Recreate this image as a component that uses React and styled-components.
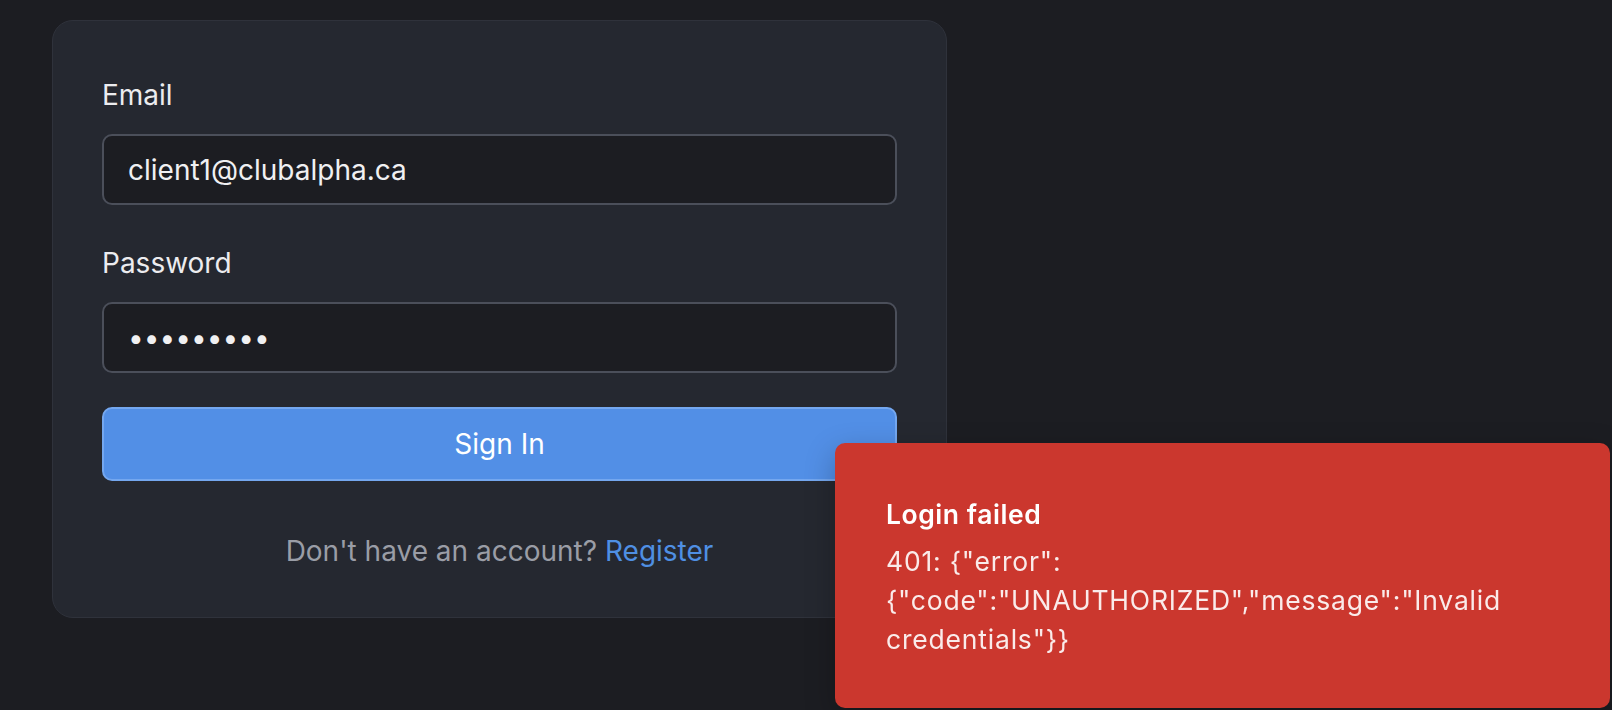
import React from "react";
import styled, { createGlobalStyle } from "styled-components";

const Global = createGlobalStyle`
  html, body {
    margin: 0;
    padding: 0;
    background: #1c1d22;
    font-family: Inter, "Noto Sans", "Liberation Sans", sans-serif;
    -webkit-font-smoothing: antialiased;
  }
  * { box-sizing: border-box; }
`;

const Page = styled.div`
  min-height: 710px;
  width: 1612px;
  padding: 20px 0 0 52px;
  background: #1c1d22;
  overflow: hidden;
`;

const Card = styled.form`
  width: 895px;
  background: #252830;
  border: 1px solid #2f323b;
  border-radius: 21px;
  padding: 57px 49px 48px 49px;
  display: flex;
  flex-direction: column;
`;

const Field = styled.div`
  display: flex;
  flex-direction: column;
  gap: 22px;
  margin-bottom: ${(p) => p.$mb || 0}px;
`;

const Label = styled.label`
  font-size: 28px;
  line-height: 34px;
  color: #ececef;
  font-weight: 400;
`;

const Input = styled.input`
  height: 71px;
  width: 100%;
  background: #1c1d22;
  border: 2px solid #4b4f5a;
  border-radius: 10px;
  padding: 0 24px;
  font-family: inherit;
  font-size: 28px;
  color: #f0f0f2;
  outline: none;
`;

const Button = styled.button`
  height: 74px;
  width: 100%;
  background: #528fe6;
  border: 2px solid #74a7ef;
  border-radius: 10px;
  color: #ffffff;
  font-family: inherit;
  font-size: 28px;
  font-weight: 400;
  margin-top: 34px;
`;

const Footer = styled.p`
  margin: 52px 0 0;
  text-align: center;
  font-size: 28px;
  line-height: 36px;
  color: #9a9da6;
`;

const Link = styled.a`
  color: #4f8fe3;
  text-decoration: none;
`;

const Toast = styled.div`
  position: fixed;
  left: 835px;
  top: 443px;
  width: 775px;
  height: 265px;
  background: #cb372e;
  border-radius: 10px;
  padding: 53px 51px 40px 51px;
  color: #ffffff;
  box-shadow: 0 10px 30px rgba(0, 0, 0, 0.25);
`;

const ToastTitle = styled.div`
  font-size: 26.5px;
  line-height: 36px;
  font-weight: 600;
  letter-spacing: 0.55px;
  color: #ffffff;
`;

const ToastBody = styled.div`
  margin-top: 10px;
  font-size: 26.5px;
  line-height: 39.2px;
  letter-spacing: 0.8px;
  color: rgba(255, 255, 255, 0.9);
  overflow-wrap: break-word;
`;

export default function App() {
  return (
    <>
      <Global />
      <Page>
        <Card onSubmit={(e) => e.preventDefault()}>
          <Field $mb={41}>
            <Label htmlFor="email">Email</Label>
            <Input id="email" type="email" defaultValue="client1@clubalpha.ca" />
          </Field>
          <Field>
            <Label htmlFor="password">Password</Label>
            <Input id="password" type="password" defaultValue="wrongpass" />
          </Field>
          <Button type="submit">Sign In</Button>
          <Footer>
            Don't have an account? <Link href="#">Register</Link>
          </Footer>
        </Card>
      </Page>
      <Toast role="alert">
        <ToastTitle>Login failed</ToastTitle>
        <ToastBody>
          401: {'{"error":{"code":"UNAUTHORIZED","message":"Invalid credentials"}}'}
        </ToastBody>
      </Toast>
    </>
  );
}
